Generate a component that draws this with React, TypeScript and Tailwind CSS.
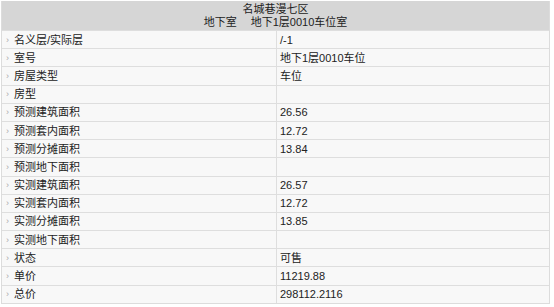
const ROWS = [
  { label: "名义层/实际层", value: "/-1" },
  { label: "室号", value: "地下1层0010车位" },
  { label: "房屋类型", value: "车位" },
  { label: "房型", value: "" },
  { label: "预测建筑面积", value: "26.56" },
  { label: "预测套内面积", value: "12.72" },
  { label: "预测分摊面积", value: "13.84" },
  { label: "预测地下面积", value: "" },
  { label: "实测建筑面积", value: "26.57" },
  { label: "实测套内面积", value: "12.72" },
  { label: "实测分摊面积", value: "13.85" },
  { label: "实测地下面积", value: "" },
  { label: "状态", value: "可售" },
  { label: "单价", value: "11219.88" },
  { label: "总价", value: "298112.2116" },
];

export default function App() {
  return (
    <div className="w-[554px] h-[307px] bg-white pt-px pl-px" style={{ fontFamily: '"Liberation Sans", "Noto Sans CJK SC", sans-serif' }}>
      <div className="w-[549px] border-r border-l border-b border-[#dcdcdc]">
        <div className="h-[29px] bg-[#d6d6d6] flex flex-col items-center justify-center text-[11px] leading-[13px] text-[#222]">
          <div>名城巷漫七区</div>
          <div className="flex gap-[14px]">
            <span>地下室</span>
            <span>地下1层0010车位室</span>
          </div>
        </div>
        {ROWS.map((r, i) => (
          <div key={i} className="flex h-[18.2px] border-t border-[#dedede] bg-[#f8f8f8] text-[11px] leading-[14px] text-[#222]">
            <div className="w-[275px] flex items-center border-r border-[#dedede]">
              <span className="w-[12px] pl-[4px] text-[#aaa] text-[9px]">›</span>
              <span>{r.label}</span>
            </div>
            <div className="flex-1 flex items-center pl-[3px]">{r.value}</div>
          </div>
        ))}
      </div>
    </div>
  );
}
